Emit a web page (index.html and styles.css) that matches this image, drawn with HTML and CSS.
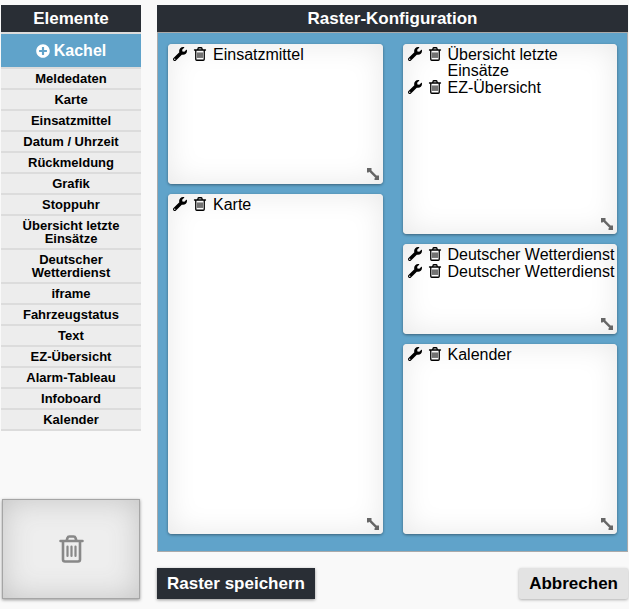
FILE: index.html
```html
<!DOCTYPE html>
<html lang="de">
<head>
	<meta charset="utf-8">
	<title>Raster-Konfiguration</title>
	<link rel="stylesheet" href="styles.css">
</head>
<body>
	<svg class="symbols" aria-hidden="true">
		<symbol id="wrench" viewBox="0 0 512 512">
			<path d="M507.73 109.1c-2.24-9.03-13.54-12.09-20.12-5.51l-74.36 74.36-67.88-11.31-11.31-67.88 74.36-74.36c6.62-6.62 3.43-17.9-5.66-20.16-47.38-11.74-99.55.91-136.58 37.93-39.64 39.64-50.55 97.1-34.05 147.2L18.74 402.76c-24.99 24.99-24.99 65.51 0 90.5 24.99 24.99 65.51 24.99 90.5 0l213.21-213.21c50.12 16.71 107.47 5.68 147.37-34.22 37.07-37.07 49.7-89.32 37.91-136.73zM64 472c-13.25 0-24-10.75-24-24 0-13.26 10.75-24 24-24s24 10.74 24 24c0 13.25-10.75 24-24 24z"/>
		</symbol>
		<symbol id="trash" viewBox="0 0 25 28">
			<path d="M1.500 6h22M4 6v18.500a2 2 0 0 0 2 2h13a2 2 0 0 0 2-2V6M7.500 6l1-3a2 2 0 0 1 2-1.500h4a2 2 0 0 1 2 1.500l1 3" fill="none" stroke="currentColor" stroke-width="2.600" stroke-linecap="round"/>
			<path d="M8.500 11.500v9.500M12.500 11.500v9.500M16.500 11.500v9.500" fill="none" stroke="currentColor" stroke-width="2.200" stroke-linecap="round"/>
		</symbol>
		<symbol id="plus" viewBox="0 0 512 512">
			<path d="M256 8C119 8 8 119 8 256s111 248 248 248 248-111 248-248S393 8 256 8zm144 276c0 6.600-5.400 12-12 12h-92v92c0 6.600-5.400 12-12 12h-56c-6.600 0-12-5.400-12-12v-92h-92c-6.600 0-12-5.400-12-12v-56c0-6.600 5.400-12 12-12h92v-92c0-6.600 5.400-12 12-12h56c6.600 0 12 5.400 12 12v92h92c6.600 0 12 5.400 12 12v56z"/>
		</symbol>
		<symbol id="resize" viewBox="0 0 12 12">
			<path d="M0 0h4.500v2.500l5 5H12V12H7.500V10.500l.8-.8-6-6-.8.8H0z"/>
		</symbol>
	</svg>

	<div class="wrapper">
		<div class="sidebar">
			<h2 class="title">Elemente</h2>
			<button type="button" class="addTile"><svg class="plus"><use href="#plus"/></svg>Kachel</button>
			<ul class="elements">
				<li>Meldedaten</li>
				<li>Karte</li>
				<li>Einsatzmittel</li>
				<li>Datum / Uhrzeit</li>
				<li>Rückmeldung</li>
				<li>Grafik</li>
				<li>Stoppuhr</li>
				<li>Übersicht letzte Einsätze</li>
				<li>Deutscher Wetterdienst</li>
				<li>iframe</li>
				<li>Fahrzeugstatus</li>
				<li>Text</li>
				<li>EZ-Übersicht</li>
				<li>Alarm-Tableau</li>
				<li>Infoboard</li>
				<li>Kalender</li>
			</ul>
			<div class="trashBox"><svg><use href="#trash"/></svg></div>
		</div>

		<div class="main">
			<h2 class="title">Raster-Konfiguration</h2>
			<div class="raster">
				<div class="column">
					<div class="tile rows3">
						<div class="entry">
							<button type="button" aria-label="Bearbeiten"><svg><use href="#wrench"/></svg></button>
							<button type="button" aria-label="Löschen"><svg><use href="#trash"/></svg></button>
							<span>Einsatzmittel</span>
						</div>
						<svg class="resize"><use href="#resize"/></svg>
					</div>
					<div class="tile rows7">
						<div class="entry">
							<button type="button" aria-label="Bearbeiten"><svg><use href="#wrench"/></svg></button>
							<button type="button" aria-label="Löschen"><svg><use href="#trash"/></svg></button>
							<span>Karte</span>
						</div>
						<svg class="resize"><use href="#resize"/></svg>
					</div>
				</div>
				<div class="column">
					<div class="tile rows4">
						<div class="entry">
							<button type="button" aria-label="Bearbeiten"><svg><use href="#wrench"/></svg></button>
							<button type="button" aria-label="Löschen"><svg><use href="#trash"/></svg></button>
							<span>Übersicht letzte<br>Einsätze</span>
						</div>
						<div class="entry">
							<button type="button" aria-label="Bearbeiten"><svg><use href="#wrench"/></svg></button>
							<button type="button" aria-label="Löschen"><svg><use href="#trash"/></svg></button>
							<span>EZ-Übersicht</span>
						</div>
						<svg class="resize"><use href="#resize"/></svg>
					</div>
					<div class="tile rows2">
						<div class="entry">
							<button type="button" aria-label="Bearbeiten"><svg><use href="#wrench"/></svg></button>
							<button type="button" aria-label="Löschen"><svg><use href="#trash"/></svg></button>
							<span>Deutscher Wetterdienst</span>
						</div>
						<div class="entry">
							<button type="button" aria-label="Bearbeiten"><svg><use href="#wrench"/></svg></button>
							<button type="button" aria-label="Löschen"><svg><use href="#trash"/></svg></button>
							<span>Deutscher Wetterdienst</span>
						</div>
						<svg class="resize"><use href="#resize"/></svg>
					</div>
					<div class="tile rows4">
						<div class="entry">
							<button type="button" aria-label="Bearbeiten"><svg><use href="#wrench"/></svg></button>
							<button type="button" aria-label="Löschen"><svg><use href="#trash"/></svg></button>
							<span>Kalender</span>
						</div>
						<svg class="resize"><use href="#resize"/></svg>
					</div>
				</div>
			</div>
			<div class="actions">
				<button type="button" class="btn save">Raster speichern</button>
				<button type="button" class="btn cancel">Abbrechen</button>
			</div>
		</div>
	</div>
</body>
</html>
```

FILE: styles.css
```css
*{
	box-sizing: border-box;
	margin:0;
	padding:0;
}
body{
	background-color: #f9f9f9;
	color:#000;
	font-family: "Liberation Sans", Arial, sans-serif;
	font-size: 16px;
}
button{
	border:0;
	background: none;
	color:inherit;
	font-family: inherit;
	cursor: pointer;
}
svg{
	display: block;
	fill: currentColor;
}
.symbols{
	display: none;
}

.wrapper{
	display: flex;
	gap:16px;
	padding:5px 1px;
}

.title{
	height:27px;
	line-height: 27px;
	background-color: #292e35;
	color:#fff;
	font-size: 17px;
	text-align: center;
}

/* Sidebar */
.sidebar{
	display: flex;
	flex-direction: column;
	flex: 0 0 140px;
}
.addTile{
	display: flex;
	align-items: center;
	justify-content: center;
	gap:4px;
	height:37px;
	border-top:2px solid #dcdcdc;
	border-bottom:2px solid #dcdcdc;
	background-color: #60a3ca;
	color:#fff;
	font-size: 16px;
	font-weight: bold;
}
.plus{
	width:14px;
	height:14px;
}
.elements{
	list-style: none;
	font-size: 13px;
	font-weight: bold;
	line-height: 13px;
	text-align: center;
}
.elements li{
	padding:3px 12px;
	border-bottom:2px solid #dcdcdc;
	background-color: #ededed;
	cursor: move;
}
.trashBox{
	display: flex;
	align-items: center;
	justify-content: center;
	height:100px;
	margin:auto 1px 0;
	border:1px solid #a5a5a5;
	background-color: #eee;
	box-shadow: inset 0 0 30px #c4c4c4, 0 1px 3px rgba(0,0,0,0.4);
	color:#888;
}
.trashBox svg{
	width:25px;
	height:28px;
}

/* Raster */
.main{
	flex: 1;
	min-width: 0;
}
.raster{
	display: grid;
	grid-template-columns: 1fr 1fr;
	gap:20px;
	padding:11px 10px 17px;
	border:1px solid #aaa;
	background-color: #60a3ca;
}
.column{
	display: grid;
	grid-auto-rows: 40px;
	gap:10px;
	min-width: 0;
}
.tile{
	position: relative;
	padding:3px 0 0 5px;
	border-radius: 4px;
	background-color: #fff;
	box-shadow: inset 0 0 30px #e8e8e8, 0 1px 3px rgba(0,0,0,0.4);
}
.rows2{
	grid-row: span 2;
}
.rows3{
	grid-row: span 3;
}
.rows4{
	grid-row: span 4;
}
.rows7{
	grid-row: span 7;
}
.entry{
	display: flex;
	align-items: flex-start;
	gap:6px;
	margin-bottom: 1px;
	line-height: 16px;
	white-space: nowrap;
}
.entry svg{
	width:14px;
	height:14px;
}
.resize{
	position: absolute;
	right:4px;
	bottom:4px;
	width:12px;
	height:12px;
	color:#666;
	cursor: nwse-resize;
}

/* Buttons */
.actions{
	display: flex;
	justify-content: space-between;
	padding-top: 16px;
}
.btn{
	height:31px;
	padding:0 10px;
	font-size: 17px;
	font-weight: bold;
	box-shadow: 0 1px 3px rgba(0,0,0,0.4);
}
.save{
	background-color: #292e35;
	color:#fff;
}
.cancel{
	border-radius: 2px;
	background-color: #e3e3e3;
	box-shadow: 0 1px 3px rgba(0,0,0,0.3);
}
```
